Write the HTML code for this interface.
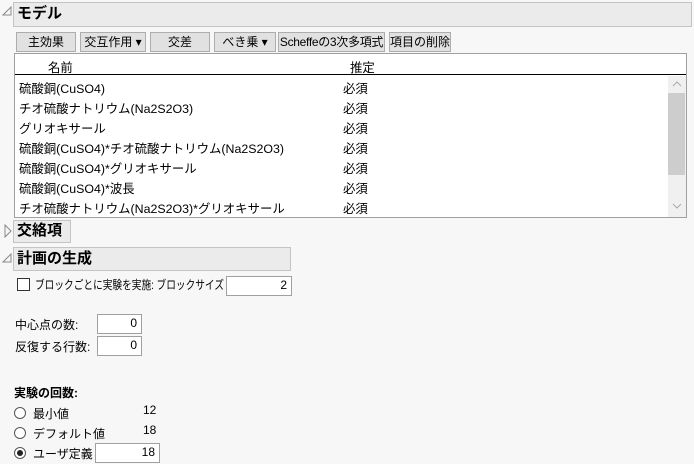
<html><head><style>
body{margin:0;width:694px;height:464px;background:#f7f7f7;font-family:"Liberation Sans","Noto Sans CJK JP",sans-serif;font-size:12px;color:#000;position:relative;overflow:hidden}
.a{position:absolute;white-space:nowrap}
.r{font-size:12.4px}
.hdr{position:absolute;background:#ebebeb;border:1px solid #c4c4c4;box-sizing:border-box;font-weight:bold;font-size:15px;padding-left:3px;line-height:22px}
.btn{position:absolute;top:32px;height:20px;box-sizing:border-box;background:#e1e1e1;border:1px solid #adadad;text-align:center;line-height:18px;font-size:12px}
.inp{position:absolute;background:#fff;border:1px solid #a0a0a0;box-sizing:border-box;text-align:right;padding-right:4px;line-height:17px}
.rad{position:absolute;left:14px;width:12px;height:12px;border:1px solid #555;border-radius:50%;box-sizing:border-box;background:#fff}
</style></head><body>
<svg class="a" style="left:2px;top:6px" width="10" height="10"><path d="M1 9 L9 1 L9 9 Z" fill="none" stroke="#888"/></svg>
<div class="hdr" style="left:13px;top:2px;width:679px;height:25px">モデル</div>
<div class="btn" style="left:16px;width:60px">主効果</div>
<div class="btn" style="left:80px;width:66px">交互作用 ▾</div>
<div class="btn" style="left:150px;width:60px">交差</div>
<div class="btn" style="left:214px;width:62px">べき乗 ▾</div>
<div class="btn" style="left:278px;width:107px;letter-spacing:-0.3px">Scheffeの3次多項式</div>
<div class="btn" style="left:389px;width:62px">項目の削除</div>
<div class="a" style="left:14px;top:53px;width:673px;height:165px;background:#fff;border:1px solid #a0a0a0;box-sizing:border-box"></div>
<div class="a" style="left:15px;top:74px;width:671px;height:1px;background:#000"></div>
<div class="a r" style="left:48px;top:58px">名前</div>
<div class="a r" style="left:350px;top:58px">推定</div>
<div class="a" style="left:668px;top:76px;width:18px;height:141px;background:#f0f0f0"></div>
<div class="a" style="left:668px;top:93px;width:17px;height:82px;background:#cdcdcd"></div>
<svg class="a" style="left:672px;top:80px" width="10" height="8"><path d="M1 6 L5 2 L9 6" fill="none" stroke="#aaa"/></svg>
<svg class="a" style="left:672px;top:202px" width="10" height="8"><path d="M1 2 L5 6 L9 2" fill="none" stroke="#aaa"/></svg>
<div class="a r" style="left:19px;top:79px">硫酸銅(CuSO4)</div><div class="a r" style="left:343px;top:79px">必須</div>
<div class="a r" style="left:19px;top:99px">チオ硫酸ナトリウム(Na2S2O3)</div><div class="a r" style="left:343px;top:99px">必須</div>
<div class="a r" style="left:19px;top:119px">グリオキサール</div><div class="a r" style="left:343px;top:119px">必須</div>
<div class="a r" style="left:19px;top:139px">硫酸銅(CuSO4)*チオ硫酸ナトリウム(Na2S2O3)</div><div class="a r" style="left:343px;top:139px">必須</div>
<div class="a r" style="left:19px;top:159px">硫酸銅(CuSO4)*グリオキサール</div><div class="a r" style="left:343px;top:159px">必須</div>
<div class="a r" style="left:19px;top:179px">硫酸銅(CuSO4)*波長</div><div class="a r" style="left:343px;top:179px">必須</div>
<div class="a r" style="left:19px;top:199px">チオ硫酸ナトリウム(Na2S2O3)*グリオキサール</div><div class="a r" style="left:343px;top:199px">必須</div>
<svg class="a" style="left:4px;top:224px" width="9" height="14"><path d="M1 1 L7 7 L1 13 Z" fill="none" stroke="#888"/></svg>
<div class="hdr" style="left:13px;top:220px;width:58px;height:23px;line-height:20px">交絡項</div>
<svg class="a" style="left:2px;top:253px" width="10" height="10"><path d="M1 9 L9 1 L9 9 Z" fill="none" stroke="#888"/></svg>
<div class="hdr" style="left:13px;top:247px;width:278px;height:24px;line-height:21px">計画の生成</div>
<div class="a" style="left:17px;top:278px;width:13px;height:13px;border:1px solid #333;box-sizing:border-box;background:#fff"></div>
<svg class="a" style="left:35px;top:276px" width="190" height="20"><text x="0" y="13" font-size="12" textLength="189" lengthAdjust="spacingAndGlyphs" font-family="Liberation Sans, Noto Sans CJK JP, sans-serif">ブロックごとに実験を実施: ブロックサイズ</text></svg>
<div class="inp" style="left:226px;top:276px;width:66px;height:20px">2</div>
<div class="a" style="left:15px;top:316px">中心点の数:</div>
<div class="inp" style="left:97px;top:314px;width:45px;height:20px">0</div>
<div class="a" style="left:15px;top:338px">反復する行数:</div>
<div class="inp" style="left:97px;top:336px;width:45px;height:20px">0</div>
<div class="a" style="left:14px;top:384px;font-weight:bold">実験の回数:</div>
<div class="rad" style="top:407px"></div><div class="a" style="left:33px;top:405px">最小値</div><div class="a" style="left:143px;top:403px">12</div>
<div class="rad" style="top:427px"></div><div class="a" style="left:33px;top:425px">デフォルト値</div><div class="a" style="left:143px;top:423px">18</div>
<div class="rad" style="top:447px"></div><div class="a" style="left:17px;top:450px;width:6px;height:6px;border-radius:50%;background:#222"></div><div class="a" style="left:33px;top:445px">ユーザ定義</div>
<div class="inp" style="left:95px;top:443px;width:65px;height:20px">18</div>
</body></html>
